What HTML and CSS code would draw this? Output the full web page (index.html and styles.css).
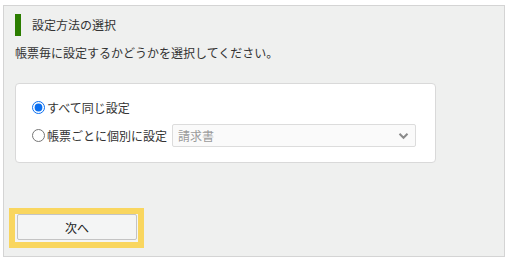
FILE: index.html
```html
<!DOCTYPE html>
<html lang="ja">
<head>
    <meta charset="UTF-8">
    <title>設定方法の選択</title>
    <link rel="stylesheet" href="styles.css">
</head>
<body>
    <div class="panel">
        <div class="heading">設定方法の選択</div>
        <p class="desc">帳票毎に設定するかどうかを選択してください。</p>

        <div class="card">
            <label class="option">
                <input type="radio" name="mode" checked>
                <span>すべて同じ設定</span>
            </label>
            <div class="option">
                <label class="option-label">
                    <input type="radio" name="mode">
                    <span>帳票ごとに個別に設定</span>
                </label>
                <div class="select-box">
                    <select disabled>
                        <option>請求書</option>
                    </select>
                    <svg width="11" height="8" viewBox="0 0 11 8">
                        <path d="M1.5 1.8 L5.5 5.8 L9.5 1.8" fill="none" stroke="#8a8a8a" stroke-width="2"/>
                    </svg>
                </div>
            </div>
        </div>

        <div class="focus-ring">
            <button class="btn">次へ</button>
        </div>
    </div>
</body>
</html>
```

FILE: styles.css
```css
body {
    margin: 0;
    font-family: "Noto Sans CJK JP", "Noto Sans", sans-serif;
    font-size: 12px;
    color: #333;
    background: #fff;
}
.panel {
    margin: 5px 5px 4px 3px;
    padding: 8px 11px 8px 11px;
    border: 1px solid #d4d4d4;
    background: #eff0ef;
}
.heading {
    height: 22px;
    line-height: 22px;
    padding-left: 11px;
    border-left: 6px solid #2b7d00;
}
.desc {
    margin: 8px 0 0;
    line-height: 18px;
}
.card {
    width: 403px;
    margin-top: 21px;
    padding: 13px 0 15px 16px;
    border: 1px solid #d9d9d9;
    border-radius: 4px;
    background: #fff;
    display: flex;
    flex-direction: column;
    gap: 7px;
}
.option,
.option-label {
    display: flex;
    align-items: center;
}
.option {
    min-height: 20px;
}
.option input {
    width: 13px;
    height: 13px;
    margin: 0 2px 0 0;
    accent-color: #0b6ff0;
}
.select-box {
    display: flex;
    align-items: center;
    width: 242px;
    height: 21px;
    margin-left: 5px;
    border: 1px solid #dcdcdc;
    border-radius: 2px;
    background: #fafafa;
}
.select-box select {
    flex: 1;
    appearance: none;
    border: none;
    background: transparent;
    font-family: inherit;
    font-size: 12px;
    color: #9a9a9a;
    padding: 0 0 0 5px;
    opacity: 1;
}
.select-box svg {
    margin-right: 6px;
}
.focus-ring {
    display: inline-block;
    margin: 45px 0 0 -6px;
    padding: 0 1px 2px 2px;
    border: 6px solid #f9d65f;
    background: #f4f5f5;
}
.btn {
    display: block;
    width: 120px;
    height: 26px;
    border: 1px solid #c4c4c4;
    border-radius: 2px;
    background: #f4f5f5;
    font-family: inherit;
    font-size: 12px;
    color: #222;
}
```
